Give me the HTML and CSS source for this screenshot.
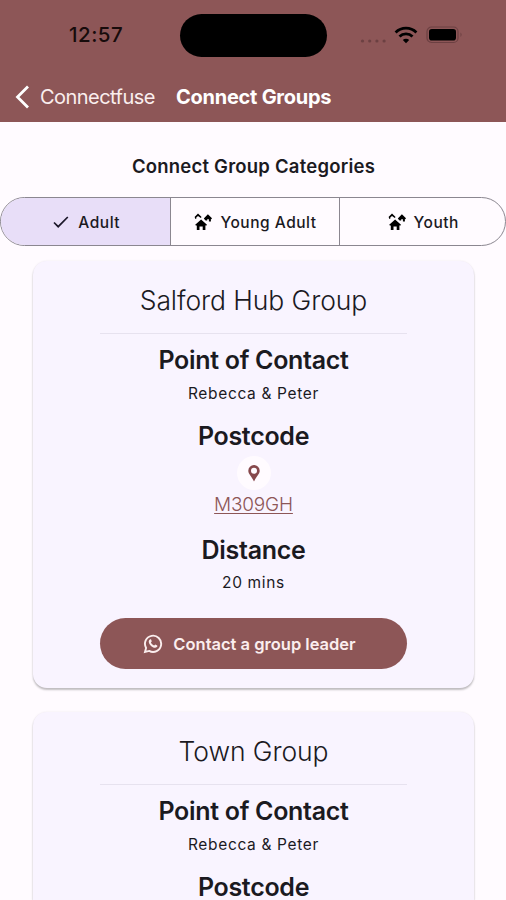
FILE: index.html
```html
<!DOCTYPE html>
<html lang="en">
<head>
<meta charset="utf-8">
<title>Connect Groups</title>
<link rel="stylesheet" href="styles.css">
</head>
<body>
<svg class="defs" width="0" height="0">
  <symbol id="houses" viewBox="0 0 18 18">
    <path d="M1.200 11.800 7.100 6.500 13 11.800 12.100 12.800 11.400 12.200V17H8.700V13.400H5.500V17H2.800V12.200L2.100 12.800z"/>
    <path d="M.5 4 4 .5 7.600 3.900 6.800 4.900 4 3 2.300 4.500V5.800H1V4.800z"/>
    <path d="M9.800 5.600 13.900 1.200 18 5.200 17.300 6.200 16.900 6V8.400H14.900V6.200H13.200V7.600H11.600L10.600 6.500z"/>
  </symbol>
</svg>
<header class="header">
  <div class="status">
    <div class="time">12:57</div>
    <div class="island"></div>
    <div class="indicators">
      <svg class="dots" width="27" height="6" viewBox="0 0 27 6"><g fill="#6c4042"><circle cx="2.500" cy="3" r="1.600"/><circle cx="9.700" cy="3" r="1.600"/><circle cx="16.900" cy="3" r="1.600"/><circle cx="24.100" cy="3" r="1.600"/></g></svg>
      <svg class="wifi" width="24" height="18" viewBox="0 0 24 18"><g fill="none" stroke="#000" stroke-width="2.800"><path d="M1.600 6.400a15 15 0 0 1 20.800 0"/><path d="M5.500 10.600a9.300 9.300 0 0 1 13 0"/></g><path d="M8.800 14a4.600 4.600 0 0 1 6.400 0L12 17.300z"/></svg>
      <svg class="battery" width="38" height="18" viewBox="0 0 38 18"><rect x="1" y="1" width="31" height="15.500" rx="4.500" fill="none" stroke="#6c4042" stroke-width="1.200"/><rect x="3" y="3" width="27" height="11.500" rx="2.800"/><path d="M34.500 6.500q2.200 2.200 0 4.500z" fill="#6c4042"/></svg>
    </div>
  </div>
  <nav class="nav">
    <svg class="back" width="16" height="26" viewBox="0 0 16 26"><path d="M14 2.500 3.500 13l10.500 10.500" fill="none" stroke="#fff" stroke-width="2.800"/></svg>
    <span class="back-label">Connectfuse</span>
    <span class="nav-title">Connect Groups</span>
  </nav>
</header>
<main>
  <h1 class="heading">Connect Group Categories</h1>
  <div class="segments">
    <div class="segment selected">
      <svg class="check" width="18" height="16" viewBox="0 0 18 16"><path d="M2 8.500 6.200 12.700 15.800 3" fill="none" stroke="#1d192b" stroke-width="1.700"/></svg>
      <span>Adult</span>
    </div>
    <div class="segment">
      <svg class="houses" width="18" height="18"><use href="#houses"/></svg>
      <span>Young Adult</span>
    </div>
    <div class="segment">
      <svg class="houses" width="18" height="18"><use href="#houses"/></svg>
      <span>Youth</span>
    </div>
  </div>
  <section class="card">
    <h2 class="title">Salford Hub Group</h2>
    <div class="rule"></div>
    <h3 class="label contact">Point of Contact</h3>
    <p class="value">Rebecca &amp; Peter</p>
    <h3 class="label postcode">Postcode</h3>
    <div class="pin"><svg width="12" height="17" viewBox="0 0 12 17"><path fill="#86484c" fill-rule="evenodd" d="M6 0a5.700 5.700 0 0 0-5.700 5.800C.3 9.200 3.800 11.500 6 16.500 8.200 11.500 11.700 9.200 11.700 5.800A5.700 5.700 0 0 0 6 0zm0 2.800a3 3 0 1 1 0 6 3 3 0 0 1 0-6z"/></svg></div>
    <a class="link">M309GH</a>
    <h3 class="label distance">Distance</h3>
    <p class="value minutes">20 mins</p>
    <div class="button">
      <svg class="whatsapp" width="20" height="20" viewBox="0 0 20 20"><path d="M2 18 3.100 13.900A8.100 8.100 0 1 1 6.200 16.900z" fill="none" stroke="#fbeeee" stroke-width="1.900"/><path d="M6.900 5.400c.4-.4 1-.3 1.200.2l.7 1.600-.9 1.200c.7 1.500 1.700 2.400 3.300 3.200l1.100-1.100 1.800.9c.5.300.4.900 0 1.400-1 1.200-2.500 1.300-4.300.4C7.700 12.100 6.200 10.400 5.800 8.300c-.2-1.200.2-2.200 1.100-2.900z" fill="#fbeeee"/></svg>
      <span>Contact a group leader</span>
    </div>
  </section>
  <section class="card last">
    <h2 class="title">Town Group</h2>
    <div class="rule"></div>
    <h3 class="label contact">Point of Contact</h3>
    <p class="value">Rebecca &amp; Peter</p>
    <h3 class="label postcode">Postcode</h3>
  </section>
</main>
</body>
</html>
```
FILE: styles.css
```css
* { box-sizing: border-box; }
body {
  margin: 0;
  height: 900px;
  overflow: hidden;
  background: #fffbff;
  color: #1b1a1f;
  font-family: Inter, "Liberation Sans", sans-serif;
}
h1, h2, h3, p { margin: 0; white-space: nowrap; }
span { white-space: nowrap; }
svg { display: block; flex: none; }
.defs { position: absolute; }
.header { height: 122px; background: #8d5657; }
.status {
  height: 70px;
  display: grid;
  grid-template-columns: 180px 147px 1fr;
  align-items: center;
}
.time {
  padding-left: 69px;
  font-size: 20.5px;
  font-weight: 500;
  letter-spacing: .5px;
  line-height: 24px;
  color: #170b0b;
}
.island { height: 43px; border-radius: 22px; background: #000; }
.indicators { display: flex; align-items: center; padding-left: 33px; margin-top: -1px; }
.dots { margin-top: 12px; }
.wifi { margin-left: 7px; }
.battery { margin-left: 8px; }
.nav { display: flex; align-items: center; height: 52px; padding: 2px 0 0 14px; color: #fff; font-size: 20px; }
.back-label { width: 115px; margin-left: 10px; color: #faeeee; letter-spacing: -.54px; }
.nav-title { margin-left: 21px; font-weight: 700; letter-spacing: -.26px; }
.heading {
  margin-top: 31px;
  padding-left: 1px;
  line-height: 26px;
  font-size: 18.5px;
  font-weight: 600;
  letter-spacing: .22px;
  text-align: center;
}
.segments {
  display: grid;
  grid-template-columns: 168.5px 169px 1fr;
  height: 49px;
  margin-top: 18px;
  border: 1px solid #8b8790;
  border-radius: 25px;
  overflow: hidden;
}
.segment {
  display: flex;
  align-items: center;
  justify-content: center;
  gap: 8px;
  padding: 1px 0 0 2px;
  font-size: 15.5px;
  font-weight: 500;
  letter-spacing: .52px;
}
.segment + .segment { border-left: 1px solid #8b8790; }
.selected { background: #e8def8; }
.card {
  display: flex;
  flex-direction: column;
  align-items: center;
  width: 441px;
  height: 427px;
  margin: 24px auto 0 33px;
  padding-top: 20px;
  background: #f9f4ff;
  border-radius: 14px;
  box-shadow: 0 2px 2px rgba(0, 0, 0, .24), 0 0 2px rgba(0, 0, 0, .08);
}
.card > * { flex: none; }
.segments + .card { margin-top: 15px; }
.last { height: 188px; border-radius: 14px 14px 0 0; }
.title { font-size: 26.5px; font-weight: 360; line-height: 39px; letter-spacing: -.08px; }
.rule { width: 307px; height: 1px; margin-top: 13px; background: #e7e2ef; }
.label { font-size: 25px; font-weight: 600; line-height: 32px; letter-spacing: -.3px; }
.contact { margin-top: 10px; }
.postcode { margin-top: 16px; }
.last .postcode { margin-top: 19px; line-height: 26px; }
.distance { margin-top: 17px; }
.value { margin-top: 8px; font-size: 15.5px; font-weight: 420; line-height: 20px; letter-spacing: .66px; }
.minutes { margin-top: 7px; }
.pin {
  display: flex;
  align-items: center;
  justify-content: center;
  width: 34px;
  height: 34px;
  margin-top: 4px;
  border-radius: 50%;
  background: #fffbff;
}
.link { margin-top: 3px; font-size: 19px; font-weight: 300; line-height: 24px; color: #8d5657; letter-spacing: -.2px; text-decoration: underline; text-decoration-thickness: 1px; text-underline-offset: 2px; }
.button {
  display: flex;
  align-items: center;
  justify-content: center;
  gap: 10px;
  width: 307px;
  height: 51px;
  margin-top: 25px;
  padding: 1px 8px 0 0;
  border-radius: 26px;
  background: #8d5657;
  color: #fbeeee;
  font-size: 16.5px;
  font-weight: 600;
}
```
